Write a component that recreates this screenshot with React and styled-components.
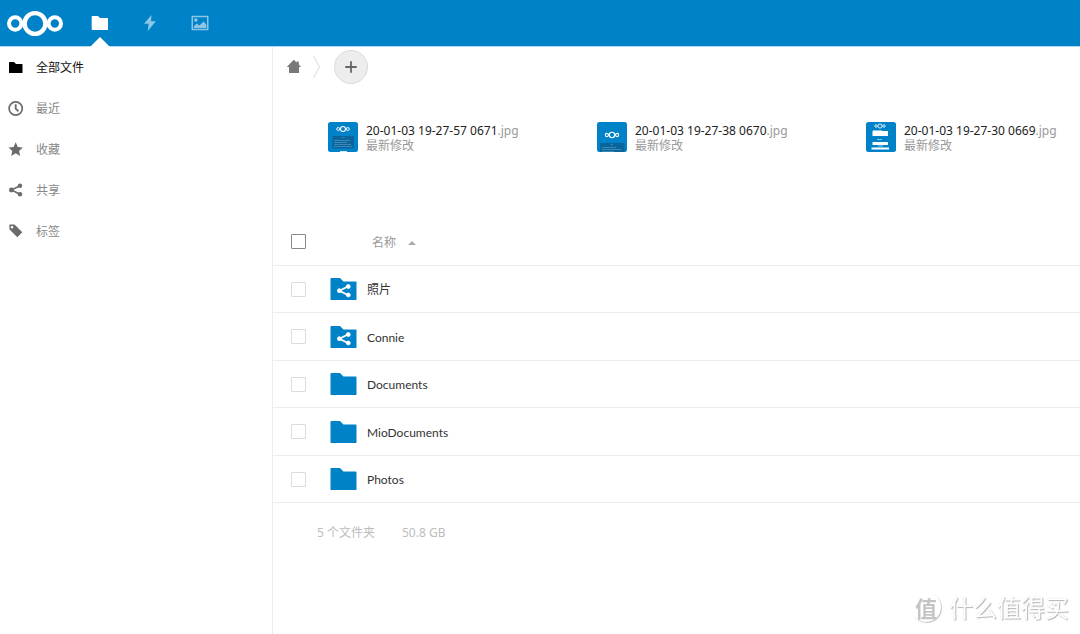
import React from "react";
import styled, { createGlobalStyle } from "styled-components";

const BLUE = "#0082c9";

const GlobalStyle = createGlobalStyle`
  *, *::before, *::after { box-sizing: border-box; }
  body {
    margin: 0;
    background: #fff;
    color: #222;
    font-family: "Noto Sans", "Noto Sans CJK SC", sans-serif;
    font-size: 12px;
    line-height: 16px;
  }
  svg { display: block; flex: none; }
`;

const Page = styled.div`
  min-height: 100vh;
  display: flex;
  flex-direction: column;
`;

const Header = styled.header`
  display: flex;
  height: 47px;
  background: ${BLUE};
  border-bottom: 1px solid #b2daef;
`;

const HomeLink = styled.a`
  display: flex;
  align-items: center;
  width: 75px;
  padding-left: 6px;
`;

const AppLink = styled.a`
  position: relative;
  display: flex;
  align-items: center;
  justify-content: center;
  width: 50px;
  color: ${(p) => (p.$active ? "#fff" : "#8cc6e7")};

  &::after {
    content: "";
    display: ${(p) => (p.$active ? "block" : "none")};
    position: absolute;
    bottom: -1px;
    left: 50%;
    margin-left: -10px;
    border: 10px solid transparent;
    border-top-width: 0;
    border-bottom-color: #fff;
  }
`;

const Body = styled.div`
  flex: 1;
  display: flex;
`;

const Sidebar = styled.nav`
  flex: 0 0 273px;
  border-right: 1px solid #ededed;
`;

const SideList = styled.ul`
  list-style: none;
  margin: 0;
  padding: 0;
`;

const SideLink = styled.a`
  display: flex;
  align-items: center;
  gap: 12px;
  height: 41px;
  padding-left: 8px;
  text-decoration: none;
  color: ${(p) => (p.$active ? "#111" : "#888")};

  svg { color: ${(p) => (p.$active ? "#000" : "#6b6b6b")}; }
`;

const Content = styled.main`
  flex: 1;
  min-width: 0;
`;

const Controls = styled.div`
  display: flex;
  align-items: center;
  height: 40px;
  padding-left: 13px;
`;

const CrumbLink = styled.a`
  display: flex;
  margin-right: 11px;
  color: #787878;
`;

const AddButton = styled.button`
  display: flex;
  align-items: center;
  justify-content: center;
  width: 34px;
  height: 34px;
  margin-left: 14px;
  padding: 0;
  border: 1px solid #dbdbdb;
  border-radius: 50%;
  background: #ededed;
  color: #666;
`;

const Recents = styled.section`
  display: grid;
  grid-template-columns: repeat(3, 1fr);
  height: 131px;
  padding-top: 35px;
`;

const RecentLink = styled.a`
  display: flex;
  align-self: start;
  gap: 8px;
  padding-left: 55px;
  line-height: 15px;
  white-space: nowrap;
  text-decoration: none;
  color: #222;
`;

const Muted = styled.span`
  color: #999;
`;

const RecentText = styled.span`
  display: flex;
  flex-direction: column;
  padding-top: 1px;
`;

const FileTable = styled.table`
  width: 100%;
  border-spacing: 0;
`;

const HeadRow = styled.tr`
  height: 48px;
`;

const FileRow = styled.tr`
  height: 48px;

  &:nth-child(odd) { height: 47px; }
`;

const HeadCell = styled.th`
  padding: 0;
  border-bottom: 1px solid #ededed;
  text-align: left;
  font-weight: 400;
  color: #999;

  &:last-child { width: 100%; }
`;

const Cell = styled.td`
  padding: 0;
  border-bottom: 1px solid #ededed;
`;

const Checkbox = styled.input.attrs({ type: "checkbox" })`
  appearance: none;
  display: block;
  width: 15px;
  height: 15px;
  margin: 0 24px 0 18px;
  border: 1px solid ${(p) => (p.$strong ? "#888" : "#dcdcdc")};
  border-radius: 1px;
  background: #fff;
`;

const SortButton = styled.button`
  display: flex;
  align-items: center;
  gap: 12px;
  padding: 2px 0 0 42px;
  border: 0;
  background: none;
  color: inherit;
  font: inherit;
`;

const FileLink = styled.a`
  display: flex;
  align-items: center;
  gap: 10px;
  text-decoration: none;
  color: #333;
  font-family: Lato, "Noto Sans CJK SC", sans-serif;
`;

const FileName = styled.span`
  padding-top: 2px;
`;

const Summary = styled.footer`
  display: flex;
  gap: 27px;
  padding: 22px 0 0 44px;
  color: #bdbdbd;
`;

const Watermark = styled.div`
  position: fixed;
  right: 11px;
  bottom: 11px;
  display: flex;
  align-items: center;
  gap: 8px;
  color: #fff;
  font: 400 24px/32px "Noto Sans CJK SC", sans-serif;
  text-shadow: 1px 1px 1px #b4b4b4, 0 0 1px #d4d4d4;
`;

const Seal = styled.span`
  display: flex;
  align-items: center;
  justify-content: center;
  width: 30px;
  height: 30px;
  border-radius: 50%;
  box-shadow: 1px 1px 1px #c4c4c4;
  color: #c4c4c4;
  font-size: 22px;
  font-weight: 700;
  text-shadow: none;
`;

const Rings = ({ x, y, s }) => (
  <g transform={`translate(${x} ${y}) scale(${s})`} fill="none" stroke="#fff">
    <circle cx="-19.8" cy="0" r="6.2" strokeWidth="4" />
    <circle cx="0" cy="0" r="10.4" strokeWidth="4.4" />
    <circle cx="19.8" cy="0" r="6.2" strokeWidth="4" />
  </g>
);

const Logo = () => (
  <svg width="58" height="28" viewBox="0 0 58 28" role="img" aria-label="Nextcloud">
    <Rings x={29} y={14.5} s={1} />
  </svg>
);

const AppFolder = () => (
  <svg width="18" height="16" viewBox="0 0 18 16" fill="currentColor">
    <path d="M1.500 1H7l2 2h7.200q.8 0 .8.800V14.200q0 .8-.8.800H1.500q-.8 0-.8-.8V1.800q0-.8.800-.8z" />
  </svg>
);

const Bolt = () => (
  <svg width="14" height="18" viewBox="0 0 14 18" fill="currentColor">
    <path d="M8.500 1 1 9.800h4.600L4.800 17 12.800 7.300H8L8.500 1z" />
  </svg>
);

const Picture = () => (
  <svg width="18" height="16" viewBox="0 0 18 16" fill="currentColor">
    <path fillRule="evenodd" d="M1.200.8h15.600q.7 0 .7.700v13q0 .7-.7.700H1.200q-.7 0-.7-.7V1.500q0-.7.700-.7zM2 2.300v11.400h14V2.300z" />
    <circle cx="4.800" cy="5" r="1.800" />
    <path d="M2.800 13V11.500L5.800 8.500l2.600 2L12.600 6.500l2.700 3.300V13z" />
  </svg>
);

const SideFolder = () => (
  <svg width="16" height="16" viewBox="0 0 16 16" fill="currentColor">
    <path d="M1.500 2H6l2 2h6q.5 0 .5.500v8q0 .5-.5.500H1.500q-.5 0-.5-.5v-10q0-.5.500-.5z" />
  </svg>
);

const Clock = () => (
  <svg width="16" height="16" viewBox="0 0 16 16" fill="none" stroke="currentColor">
    <circle cx="7.700" cy="7.500" r="6.600" strokeWidth="1.700" />
    <path d="M7.700 3.200v4.500l2.700 2.700" strokeWidth="1.800" />
  </svg>
);

const Star = () => (
  <svg width="16" height="16" viewBox="0 0 16 16" fill="currentColor">
    <path d="M7.700.3 9.800 5.100l5 .5-3.700 3.400 1.100 5-4.500-2.700-4.500 2.700 1.100-5L.6 5.600l5-.5z" />
  </svg>
);

const Share = () => (
  <svg width="16" height="16" viewBox="0 0 16 16" fill="currentColor">
    <path d="M12 2.700 3.500 7 12 11.300" fill="none" stroke="currentColor" strokeWidth="1.700" />
    <circle cx="12" cy="2.700" r="2.200" />
    <circle cx="3.400" cy="7" r="2.400" />
    <circle cx="12" cy="11.300" r="2.200" />
  </svg>
);

const Tag = () => (
  <svg width="16" height="16" viewBox="0 0 16 16" fill="currentColor">
    <path fillRule="evenodd" d="M1.600.4h4.300q.5 0 .9.400l7 7q.5.500 0 1l-4 4q-.5.500-1 0l-7-7q-.4-.4-.4-.9V.8q0-.4.200-.4zM4 2a1.300 1.300 0 1 0 0 2.600A1.300 1.300 0 0 0 4 2z" />
  </svg>
);

const House = () => (
  <svg width="16" height="16" viewBox="0 0 16 16" fill="currentColor">
    <path d="M7.800.8 10.600 3.500V2.400h2.200V5.600l2.200 2.500h-2V14H3V8.100H.8z" />
  </svg>
);

const Chevron = () => (
  <svg width="7" height="24" viewBox="0 0 7 24" fill="none" stroke="#dadada">
    <path d="M.5 1 6.500 12 .5 23" />
  </svg>
);

const Plus = () => (
  <svg width="16" height="16" viewBox="0 0 16 16" fill="none" stroke="currentColor" strokeWidth="1.800">
    <path d="M8 2.300v11.400M2.300 8h11.400" />
  </svg>
);

const SortArrow = () => (
  <svg width="8" height="4" viewBox="0 0 8 4" fill="#aaa">
    <path d="M4 0l4 4H0z" />
  </svg>
);

const Folder = ({ shared }) => (
  <svg width="27" height="24" viewBox="0 0 27 24">
    <path fill={BLUE} d="M1.200 1H10l3.500 3.500h12.300q.7 0 .7.700v17.200q0 .6-.7.600H1.200q-.7 0-.7-.6V1.700q0-.7.700-.7z" />
    {shared && (
      <g fill="#fff" stroke="#fff">
        <path d="M18.300 9.300 9.500 13.700 18.300 18.200" fill="none" strokeWidth="1.800" />
        <circle cx="18.300" cy="9.500" r="1.900" />
        <circle cx="9.400" cy="13.700" r="1.900" />
        <circle cx="18.300" cy="18" r="1.900" />
      </g>
    )}
  </svg>
);

const Thumb = ({ kind }) => (
  <svg width="30" height="30" viewBox="0 0 30 30">
    <rect width="30" height="30" rx="2.500" fill={BLUE} />
    {kind === "dialog" && (
      <>
        <Rings x={15} y={7} s={0.24} />
        <rect x="4.500" y="14" width="21.500" height="12.500" rx="1" fill="#0a659c" />
        <path d="M14.500 15.500h2M6 18.500h16M6 20.500h13M6 22.500h17M6 24.500h18" stroke="#3a88b6" strokeWidth="1" />
        <path d="M12 29.500h7" stroke="#d8edf8" />
      </>
    )}
    {kind === "card" && (
      <>
        <Rings x={15} y={13} s={0.26} />
        <path d="M3 21h24.500v9H3z" fill="#0a659c" />
        <path d="M14 22.500h2M5 25.500h14M5 27.500h19M5 29.500h12" stroke="#3a88b6" strokeWidth="1" />
      </>
    )}
    {kind === "form" && (
      <>
        <Rings x={14} y={4} s={0.2} />
        <path d="M6.500 9h15.500v5H6.500zM6.500 20h15.500v3H6.500zM5.500 25.500h17.500v2H5.500z" fill="#fff" />
        <path d="M7 8.500h9M11 17.500h5M12 24h5" stroke="#8cc6e7" />
      </>
    )}
  </svg>
);

const apps = [
  { name: "文件", icon: <AppFolder />, active: true },
  { name: "动态", icon: <Bolt /> },
  { name: "图库", icon: <Picture /> },
];

const views = [
  { name: "全部文件", icon: <SideFolder />, active: true },
  { name: "最近", icon: <Clock /> },
  { name: "收藏", icon: <Star /> },
  { name: "共享", icon: <Share /> },
  { name: "标签", icon: <Tag /> },
];

const recents = [
  { name: "20-01-03 19-27-57 0671", kind: "dialog" },
  { name: "20-01-03 19-27-38 0670", kind: "card" },
  { name: "20-01-03 19-27-30 0669", kind: "form" },
];

const files = [
  { name: "照片", shared: true },
  { name: "Connie", shared: true },
  { name: "Documents" },
  { name: "MioDocuments" },
  { name: "Photos" },
];

export default function App() {
  return (
    <Page>
      <GlobalStyle />
      <Header>
        <HomeLink href="#home"><Logo /></HomeLink>
        {apps.map((a) => (
          <AppLink key={a.name} href="#app" aria-label={a.name} $active={a.active}>
            {a.icon}
          </AppLink>
        ))}
      </Header>
      <Body>
        <Sidebar>
          <SideList>
            {views.map((v) => (
              <li key={v.name}>
                <SideLink href="#view" $active={v.active}>{v.icon}{v.name}</SideLink>
              </li>
            ))}
          </SideList>
        </Sidebar>
        <Content>
          <Controls>
            <CrumbLink href="#root" aria-label="主页"><House /></CrumbLink>
            <Chevron />
            <AddButton type="button" aria-label="新建"><Plus /></AddButton>
          </Controls>
          <Recents>
            {recents.map((r) => (
              <RecentLink key={r.name} href="#file">
                <Thumb kind={r.kind} />
                <RecentText>
                  <span>{r.name}<Muted>.jpg</Muted></span>
                  <Muted>最新修改</Muted>
                </RecentText>
              </RecentLink>
            ))}
          </Recents>
          <FileTable>
            <thead>
              <HeadRow>
                <HeadCell scope="col"><Checkbox aria-label="全选" $strong /></HeadCell>
                <HeadCell scope="col">
                  <SortButton type="button">名称<SortArrow /></SortButton>
                </HeadCell>
              </HeadRow>
            </thead>
            <tbody>
              {files.map((f) => (
                <FileRow key={f.name}>
                  <Cell><Checkbox aria-label={f.name} /></Cell>
                  <Cell>
                    <FileLink href="#folder">
                      <Folder shared={f.shared} />
                      <FileName>{f.name}</FileName>
                    </FileLink>
                  </Cell>
                </FileRow>
              ))}
            </tbody>
          </FileTable>
          <Summary>
            <span>5 个文件夹</span>
            <span>50.8 GB</span>
          </Summary>
        </Content>
      </Body>
      <Watermark><Seal>值</Seal>什么值得买</Watermark>
    </Page>
  );
}
